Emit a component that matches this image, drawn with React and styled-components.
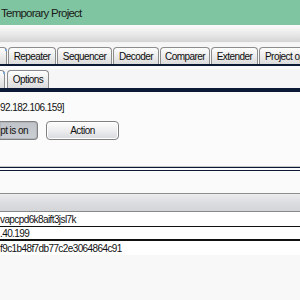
import React from "react";
import styled, { createGlobalStyle } from "styled-components";

const Global = createGlobalStyle`
  html, body { margin: 0; padding: 0; background: #f8f8f8; }
  body { font-family: "Liberation Sans", Arial, sans-serif; color: #111; }
  * { box-sizing: border-box; }
`;

const Page = styled.div`
  width: 300px;
  height: 300px;
  overflow: hidden;
  display: flex;
  flex-direction: column;
  background: #f8f8f8;
`;

const TitleBar = styled.div`
  height: 25px;
  flex: 0 0 auto;
  background: #80c5a1;
  display: flex;
  align-items: center;
  padding-left: 1px;
  font-size: 11.5px;
  letter-spacing: -0.75px;
  color: #1a1a1a;
`;

const MenuBar = styled.div`
  height: 18px;
  flex: 0 0 auto;
  background: linear-gradient(#fbfbfb, #e8e8e8 55%, #d4d4d4);
  border-bottom: 1px solid #f4f4f4;
`;

const TabStrip = styled.div`
  display: flex;
  flex: 0 0 auto;
  align-items: flex-end;
  gap: ${(p) => p.$gap}px;
  height: ${(p) => p.$h}px;
  padding-top: ${(p) => p.$pt}px;
  background: #f6f6f6;
  border-bottom: ${(p) => p.$bb}px solid #0c1a36;
  white-space: nowrap;
  overflow: hidden;
`;

const Tab = styled.div`
  flex: 0 0 auto;
  width: ${(p) => p.$w}px;
  height: 100%;
  display: flex;
  align-items: center;
  justify-content: ${(p) => (p.$left ? "flex-start" : "center")};
  padding-left: ${(p) => (p.$left ? 5 : 0)}px;
  font-size: 10px;
  letter-spacing: -0.55px;
  color: #0d0d0d;
  background: linear-gradient(#fefefe, #f0f0f0 40%, #dcdcdc);
  border: 1px solid #8c8c8c;
  border-bottom: none;
  border-radius: 4px 4px 0 0;
  border-left-width: ${(p) => (p.$cut ? 0 : 1)}px;
  border-top-left-radius: ${(p) => (p.$cut ? 0 : 4)}px;
  position: relative;
  &::after {
    content: "";
    position: absolute;
    top: 1px;
    right: -1px;
    width: 2px;
    height: 2px;
    background: ${(p) => (p.$cut ? "#7fa8d8" : "transparent")};
  }
`;

const Gap = styled.div`
  height: 3px;
  flex: 0 0 auto;
  background: #fbfbfb;
`;

const Panel = styled.div`
  height: 75px;
  flex: 0 0 auto;
  background: #fbfbfb;
  border-top: 1px solid #0c1a36;
  display: flex;
  flex-direction: column;
  padding-top: 9px;
  gap: 7px;
`;

const Host = styled.div`
  font-size: 10px;
  letter-spacing: -0.55px;
  height: 13px;
  line-height: 13px;
  color: #111;
`;

const ButtonRow = styled.div`
  display: flex;
  gap: 8px;
`;

const Button = styled.div`
  width: ${(p) => p.$w}px;
  height: 19px;
  display: flex;
  align-items: center;
  white-space: nowrap;
  justify-content: ${(p) => (p.$cut ? "flex-end" : "center")};
  padding-right: ${(p) => (p.$cut ? 9 : 0)}px;
  font-size: 10px;
  letter-spacing: -0.55px;
  color: #111;
  border: 1px solid #808080;
  border-left-width: ${(p) => (p.$cut ? 0 : 1)}px;
  border-radius: ${(p) => (p.$cut ? "0 4px 4px 0" : "4px")};
  background: ${(p) =>
    p.$pressed
      ? "linear-gradient(#c0c3c8, #cbced3)"
      : "linear-gradient(#fdfdfd, #eeeef0 50%, #d8d9de)"};
  box-shadow: inset 0 0 0 1px ${(p) => (p.$pressed ? "#b4b7bd" : "#ffffff")};
`;

const PanelFoot = styled.div`
  height: 5px;
  flex: 0 0 auto;
  border-top: 1px solid #c8c8c8;
  border-bottom: 1px solid #0c1a36;
  box-shadow: inset 0 1px 0 #0c1a36;
  background: #fbfbfb;
`;

const Spacer = styled.div`
  height: 22px;
  flex: 0 0 auto;
  background: #fafafa;
`;

const Header = styled.div`
  height: 19px;
  flex: 0 0 auto;
  border-top: 1px solid #8e8e8e;
  border-bottom: 1px solid #8a8a8a;
  background: linear-gradient(#ececef, #dcdde1 50%, #d4d5d9);
`;

const Row = styled.div`
  height: ${(p) => (p.$sel ? 15 : 14)}px;
  flex: 0 0 auto;
  display: flex;
  align-items: center;
  font-size: 10px;
  letter-spacing: -0.6px;
  background: #ffffff;
  border-top: ${(p) => (p.$sel ? "1px solid #111" : "none")};
  border-bottom: ${(p) => (p.$sel ? "2px solid #111" : "none")};
`;

export default function App() {
  return (
    <Page>
      <Global />
      <TitleBar>Temporary Project</TitleBar>
      <MenuBar />
      <TabStrip $gap={1} $h={23} $pt={4} $bb={2}>
        <Tab $w={7} $cut />
        <Tab $w={48}>Repeater</Tab>
        <Tab $w={55}>Sequencer</Tab>
        <Tab $w={46}>Decoder</Tab>
        <Tab $w={50}>Comparer</Tab>
        <Tab $w={47}>Extender</Tab>
        <Tab $w={80} $left>Project options</Tab>
      </TabStrip>
      <Gap />
      <TabStrip $gap={2} $h={22} $pt={1} $bb={3}>
        <Tab $w={5} $cut />
        <Tab $w={42}>Options</Tab>
      </TabStrip>
      <Panel>
        <Host>92.182.106.159]</Host>
        <ButtonRow>
          <Button $w={38} $cut $pressed>pt is on</Button>
          <Button $w={73}>Action</Button>
        </ButtonRow>
      </Panel>
      <PanelFoot />
      <Spacer />
      <Header />
      <Row>vapcpd6k8aift3jsl7k</Row>
      <Row $sel>.40.199</Row>
      <Row>f9c1b48f7db77c2e3064864c91</Row>
    </Page>
  );
}
